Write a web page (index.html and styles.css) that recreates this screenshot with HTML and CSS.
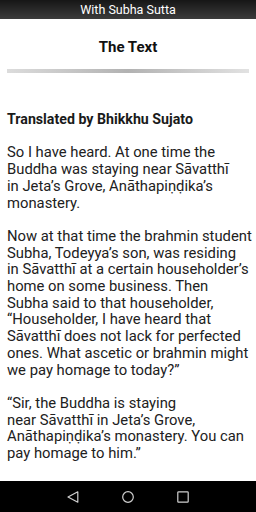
FILE: index.html
```html
<!DOCTYPE html>
<html lang="en">
<head>
  <meta charset="UTF-8">
  <meta name="viewport" content="width=device-width, initial-scale=1.0">
  <title>With Subha Sutta</title>
  <link rel="stylesheet" href="styles.css">
</head>
<body>
  <header class="top-bar">With Subha Sutta</header>

  <main class="content">
    <h1 class="page-title">The Text</h1>
    <div class="divider"></div>

    <h2 class="translator">Translated by Bhikkhu Sujato</h2>

    <p>So I have heard. At one time the Buddha was staying near&nbsp;Sāvatthī in&nbsp;Jeta’s&nbsp;Grove, Anāthapiṇḍika’s monastery.</p>

    <p>Now at that time the brahmin student Subha, Todeyya’s son, was residing in&nbsp;Sāvatthī at a certain householder’s home on some business. Then Subha&nbsp;said to that householder, “Householder, I have heard that Sāvatthī does not lack for perfected ones. What ascetic or brahmin might we pay homage to today?”</p>

    <p>“Sir, the Buddha is staying near&nbsp;Sāvatthī in&nbsp;Jeta’s&nbsp;Grove, Anāthapiṇḍika’s monastery. You can pay homage to him.”</p>
  </main>

  <nav class="nav-bar">
    <svg width="12" height="12" viewBox="0 0 12 12">
      <path d="M10.8 0.8 L1 6 L10.8 11.2 Z" fill="none" stroke="#cfcfcf" stroke-width="1.2" stroke-linejoin="round"/>
    </svg>
    <svg width="12" height="12" viewBox="0 0 12 12">
      <circle cx="6" cy="6" r="5.3" fill="none" stroke="#cfcfcf" stroke-width="1.2"/>
    </svg>
    <svg width="12" height="12" viewBox="0 0 12 12">
      <rect x="0.8" y="0.8" width="10.4" height="10.4" rx="0.8" fill="none" stroke="#cfcfcf" stroke-width="1.2"/>
    </svg>
  </nav>
</body>
</html>
```

FILE: styles.css
```css
* {
  margin: 0;
  padding: 0;
  box-sizing: border-box;
}

body {
  width: 256px;
  height: 512px;
  overflow: hidden;
  background-color: #fff;
  color: #212121;
  font-family: Roboto, "Noto Sans", sans-serif;
  display: flex;
  flex-direction: column;
}

.top-bar {
  flex: none;
  height: 19px;
  background: linear-gradient(to bottom, #161616, #3c3c3c);
  color: #fff;
  font-size: 12.5px;
  line-height: 19px;
  text-align: center;
}

.content {
  flex: 1;
  overflow: hidden;
  padding: 0 1px 0 7px;
}

.page-title {
  font-size: 15px;
  font-weight: bold;
  color: #111;
  text-align: center;
  margin-top: 19px;
  margin-left: -6px;
  line-height: 18px;
}

.divider {
  height: 4px;
  margin-top: 13px;
  margin-right: 6px;
  background: linear-gradient(to right, #dcdcdc, #b2b2b2 50%, #e2e2e2);
}

.translator {
  font-size: 14.2px;
  font-weight: bold;
  color: #1a1a1a;
  margin-top: 38px;
  line-height: 16.7px;
}

p {
  font-size: 14.8px;
  line-height: 16.7px;
  margin-top: 16.7px;
}

.nav-bar {
  flex: none;
  height: 31px;
  background-color: #000;
  display: flex;
  justify-content: center;
  align-items: center;
  gap: 43px;
}
```
